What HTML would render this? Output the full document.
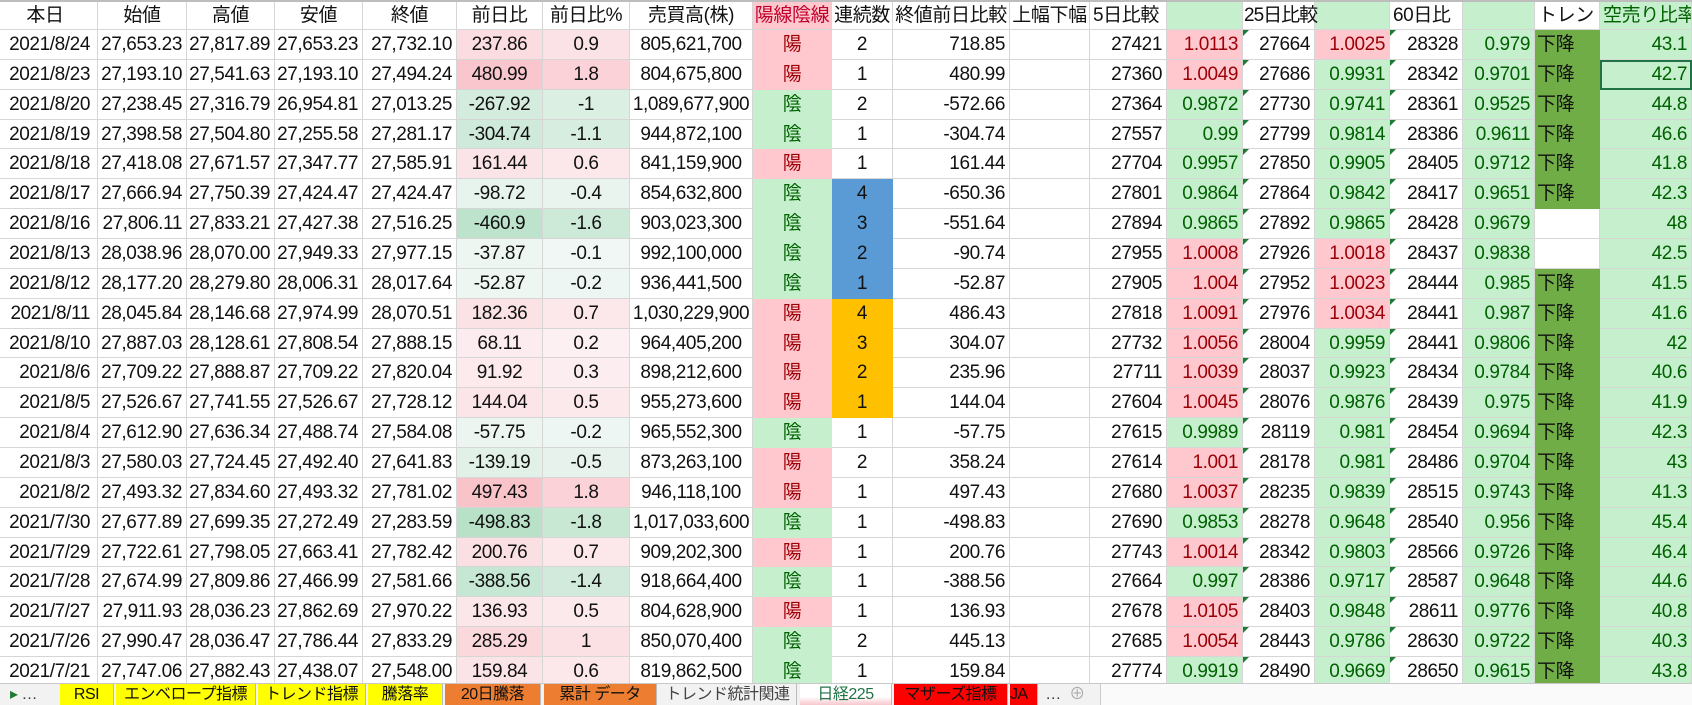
<!DOCTYPE html>
<html><head><meta charset="utf-8"><style>
*{margin:0;padding:0;box-sizing:border-box}
body{width:1692px;height:705px;overflow:hidden;background:#fff;font-family:"Liberation Sans","Noto Sans CJK JP",sans-serif;font-size:19px;letter-spacing:-0.4px;color:#111;position:relative}
.r{display:grid;grid-template-columns:98px 89px 88px 88px 94px 86px 87px 123px 79px 61px 117px 80px 77px 76px 72px 75px 73px 72px 65px 92px;height:29.86px}
.r i{font-style:normal;display:block;border-right:1px solid #d6d6d6;border-bottom:1px solid #d6d6d6;text-align:right;padding-right:4px;line-height:29px;white-space:nowrap;overflow:hidden;position:relative}
.r i:first-child{padding-right:7px}
.hd{height:30px;border-top:2px solid #bdbdbd}
.hd i{text-align:center;padding:0;line-height:27px}
.hd i.l{text-align:left;padding-left:3px}
.r i.c{text-align:center;padding:0}
.y{background:#ffc7ce;color:#9c0006;border-color:#ffc7ce!important}
.n{background:#c6efce;color:#006100;border-color:#c6efce!important}
.p{background:#ffc7ce;color:#9c0006}
.g{background:#c6efce;color:#006100}
.t::before{content:"";position:absolute;left:0;top:0;border-top:6px solid #1e7b34;border-right:6px solid transparent}
.d{background:#70ad47;text-align:left!important;padding-left:2px!important;border-color:#70ad47!important}
.s{background:#c6efce;color:#006100}
.b{background:#5b9bd5;border-color:#5b9bd5!important}
.o{background:#ffc000;border-color:#ffc000!important}
.sel{outline:2px solid #217346;outline-offset:-2px}
#tabs{position:absolute;left:0;top:683px;width:1692px;height:22px;background:#f2f2f2;border-top:1px solid #c8c8c8;font-size:16px;letter-spacing:-0.5px}
#tabs div{position:absolute;top:0;height:21px;line-height:21px;text-align:center;color:#111;border-right:1px solid #bbb}
</style></head><body>
<div class="r hd"><i>本日</i><i>始値</i><i>高値</i><i>安値</i><i>終値</i><i>前日比</i><i>前日比%</i><i>売買高(株)</i><i style="background:#ffc7ce;color:#c0002a">陽線陰線</i><i>連続数</i><i>終値前日比較</i><i>上幅下幅</i><i class="l">5日比較</i><i style="background:#c6efce"></i><i class="l" style="overflow:visible;z-index:2;letter-spacing:-1px;padding-left:1px">25日比較</i><i style="background:#c6efce"></i><i class="l">60日比</i><i style="background:#c6efce"></i><i class="l">トレンド</i><i class="l" style="background:#c6efce;color:#006100">空売り比率</i></div>
<div class="r"><i>2021/8/24</i><i>27,653.23</i><i>27,817.89</i><i>27,653.23</i><i>27,732.10</i><i class="c" style="background:#fbdce0">237.86</i><i class="c" style="background:#fbe2e6">0.9</i><i class="c">805,621,700</i><i class="c y">陽</i><i class="c">2</i><i>718.85</i><i></i><i>27421</i><i class="p">1.0113</i><i class="t">27664</i><i class="p">1.0025</i><i class="t">28328</i><i class="g">0.979</i><i class="d">下降</i><i class="s">43.1</i></div>
<div class="r"><i>2021/8/23</i><i>27,193.10</i><i>27,541.63</i><i>27,193.10</i><i>27,494.24</i><i class="c" style="background:#f8c6cc">480.99</i><i class="c" style="background:#fad2d7">1.8</i><i class="c">804,675,800</i><i class="c y">陽</i><i class="c">1</i><i>480.99</i><i></i><i>27360</i><i class="p">1.0049</i><i class="t">27686</i><i class="g">0.9931</i><i class="t">28342</i><i class="g">0.9701</i><i class="d">下降</i><i class="s sel">42.7</i></div>
<div class="r"><i>2021/8/20</i><i>27,238.45</i><i>27,316.79</i><i>26,954.81</i><i>27,013.25</i><i class="c" style="background:#d3ecdd">-267.92</i><i class="c" style="background:#dbefe3">-1</i><i class="c">1,089,677,900</i><i class="c n">陰</i><i class="c">2</i><i>-572.66</i><i></i><i>27364</i><i class="g">0.9872</i><i class="t">27730</i><i class="g">0.9741</i><i class="t">28361</i><i class="g">0.9525</i><i class="d">下降</i><i class="s">44.8</i></div>
<div class="r"><i>2021/8/19</i><i>27,398.58</i><i>27,504.80</i><i>27,255.58</i><i>27,281.17</i><i class="c" style="background:#cfeada">-304.74</i><i class="c" style="background:#d7ede0">-1.1</i><i class="c">944,872,100</i><i class="c n">陰</i><i class="c">1</i><i>-304.74</i><i></i><i>27557</i><i class="g">0.99</i><i class="t">27799</i><i class="g">0.9814</i><i class="t">28386</i><i class="g">0.9611</i><i class="d">下降</i><i class="s">46.6</i></div>
<div class="r"><i>2021/8/18</i><i>27,418.08</i><i>27,671.57</i><i>27,347.77</i><i>27,585.91</i><i class="c" style="background:#fbe4e7">161.44</i><i class="c" style="background:#fce8eb">0.6</i><i class="c">841,159,900</i><i class="c y">陽</i><i class="c">1</i><i>161.44</i><i></i><i>27704</i><i class="g">0.9957</i><i class="t">27850</i><i class="g">0.9905</i><i class="t">28405</i><i class="g">0.9712</i><i class="d">下降</i><i class="s">41.8</i></div>
<div class="r"><i>2021/8/17</i><i>27,666.94</i><i>27,750.39</i><i>27,424.47</i><i>27,424.47</i><i class="c" style="background:#e7f3ed">-98.72</i><i class="c" style="background:#e9f4ee">-0.4</i><i class="c">854,632,800</i><i class="c n">陰</i><i class="c b">4</i><i>-650.36</i><i></i><i>27801</i><i class="g">0.9864</i><i class="t">27864</i><i class="g">0.9842</i><i class="t">28417</i><i class="g">0.9651</i><i class="d">下降</i><i class="s">42.3</i></div>
<div class="r"><i>2021/8/16</i><i>27,806.11</i><i>27,833.21</i><i>27,427.38</i><i>27,516.25</i><i class="c" style="background:#bde3cc">-460.9</i><i class="c" style="background:#cde9d7">-1.6</i><i class="c">903,023,300</i><i class="c n">陰</i><i class="c b">3</i><i>-551.64</i><i></i><i>27894</i><i class="g">0.9865</i><i class="t">27892</i><i class="g">0.9865</i><i class="t">28428</i><i class="g">0.9679</i><i></i><i class="s">48</i></div>
<div class="r"><i>2021/8/13</i><i>28,038.96</i><i>28,070.00</i><i>27,949.33</i><i>27,977.15</i><i class="c" style="background:#eef6f2">-37.87</i><i class="c" style="background:#f1f7f5">-0.1</i><i class="c">992,100,000</i><i class="c n">陰</i><i class="c b">2</i><i>-90.74</i><i></i><i>27955</i><i class="p">1.0008</i><i class="t">27926</i><i class="p">1.0018</i><i class="t">28437</i><i class="g">0.9838</i><i></i><i class="s">42.5</i></div>
<div class="r"><i>2021/8/12</i><i>28,177.20</i><i>28,279.80</i><i>28,006.31</i><i>28,017.64</i><i class="c" style="background:#edf6f1">-52.87</i><i class="c" style="background:#eef6f3">-0.2</i><i class="c">936,441,500</i><i class="c n">陰</i><i class="c b">1</i><i>-52.87</i><i></i><i>27905</i><i class="p">1.004</i><i class="t">27952</i><i class="p">1.0023</i><i class="t">28444</i><i class="g">0.985</i><i class="d">下降</i><i class="s">41.5</i></div>
<div class="r"><i>2021/8/11</i><i>28,045.84</i><i>28,146.68</i><i>27,974.99</i><i>28,070.51</i><i class="c" style="background:#fbe2e5">182.36</i><i class="c" style="background:#fce7ea">0.7</i><i class="c">1,030,229,900</i><i class="c y">陽</i><i class="c o">4</i><i>486.43</i><i></i><i>27818</i><i class="p">1.0091</i><i class="t">27976</i><i class="p">1.0034</i><i class="t">28441</i><i class="g">0.987</i><i class="d">下降</i><i class="s">41.6</i></div>
<div class="r"><i>2021/8/10</i><i>27,887.03</i><i>28,128.61</i><i>27,808.54</i><i>27,888.15</i><i class="c" style="background:#fcecef">68.11</i><i class="c" style="background:#fcf0f2">0.2</i><i class="c">964,405,200</i><i class="c y">陽</i><i class="c o">3</i><i>304.07</i><i></i><i>27732</i><i class="p">1.0056</i><i class="t">28004</i><i class="g">0.9959</i><i class="t">28441</i><i class="g">0.9806</i><i class="d">下降</i><i class="s">42</i></div>
<div class="r"><i>2021/8/6</i><i>27,709.22</i><i>27,888.87</i><i>27,709.22</i><i>27,820.04</i><i class="c" style="background:#fceaed">91.92</i><i class="c" style="background:#fcedf0">0.3</i><i class="c">898,212,600</i><i class="c y">陽</i><i class="c o">2</i><i>235.96</i><i></i><i>27711</i><i class="p">1.0039</i><i class="t">28037</i><i class="g">0.9923</i><i class="t">28434</i><i class="g">0.9784</i><i class="d">下降</i><i class="s">40.6</i></div>
<div class="r"><i>2021/8/5</i><i>27,526.67</i><i>27,741.55</i><i>27,526.67</i><i>27,728.12</i><i class="c" style="background:#fce5e8">144.04</i><i class="c" style="background:#fce9ec">0.5</i><i class="c">955,273,600</i><i class="c y">陽</i><i class="c o">1</i><i>144.04</i><i></i><i>27604</i><i class="p">1.0045</i><i class="t">28076</i><i class="g">0.9876</i><i class="t">28439</i><i class="g">0.975</i><i class="d">下降</i><i class="s">41.9</i></div>
<div class="r"><i>2021/8/4</i><i>27,612.90</i><i>27,636.34</i><i>27,488.74</i><i>27,584.08</i><i class="c" style="background:#edf5f1">-57.75</i><i class="c" style="background:#eef6f3">-0.2</i><i class="c">965,552,300</i><i class="c n">陰</i><i class="c">1</i><i>-57.75</i><i></i><i>27615</i><i class="g">0.9989</i><i class="t">28119</i><i class="g">0.981</i><i class="t">28454</i><i class="g">0.9694</i><i class="d">下降</i><i class="s">42.3</i></div>
<div class="r"><i>2021/8/3</i><i>27,580.03</i><i>27,724.45</i><i>27,492.40</i><i>27,641.83</i><i class="c" style="background:#e2f1e7">-139.19</i><i class="c" style="background:#e6f2eb">-0.5</i><i class="c">873,263,100</i><i class="c y">陽</i><i class="c">2</i><i>358.24</i><i></i><i>27614</i><i class="p">1.001</i><i class="t">28178</i><i class="g">0.981</i><i class="t">28486</i><i class="g">0.9704</i><i class="d">下降</i><i class="s">43</i></div>
<div class="r"><i>2021/8/2</i><i>27,493.32</i><i>27,834.60</i><i>27,493.32</i><i>27,781.02</i><i class="c" style="background:#f8c4ca">497.43</i><i class="c" style="background:#fad2d7">1.8</i><i class="c">946,118,100</i><i class="c y">陽</i><i class="c">1</i><i>497.43</i><i></i><i>27680</i><i class="p">1.0037</i><i class="t">28235</i><i class="g">0.9839</i><i class="t">28515</i><i class="g">0.9743</i><i class="d">下降</i><i class="s">41.3</i></div>
<div class="r"><i>2021/7/30</i><i>27,677.89</i><i>27,699.35</i><i>27,272.49</i><i>27,283.59</i><i class="c" style="background:#b8e1c8">-498.83</i><i class="c" style="background:#c8e8d4">-1.8</i><i class="c">1,017,033,600</i><i class="c n">陰</i><i class="c">1</i><i>-498.83</i><i></i><i>27690</i><i class="g">0.9853</i><i class="t">28278</i><i class="g">0.9648</i><i class="t">28540</i><i class="g">0.956</i><i class="d">下降</i><i class="s">45.4</i></div>
<div class="r"><i>2021/7/29</i><i>27,722.61</i><i>27,798.05</i><i>27,663.41</i><i>27,782.42</i><i class="c" style="background:#fbe0e3">200.76</i><i class="c" style="background:#fce7ea">0.7</i><i class="c">909,202,300</i><i class="c y">陽</i><i class="c">1</i><i>200.76</i><i></i><i>27743</i><i class="p">1.0014</i><i class="t">28342</i><i class="g">0.9803</i><i class="t">28566</i><i class="g">0.9726</i><i class="d">下降</i><i class="s">46.4</i></div>
<div class="r"><i>2021/7/28</i><i>27,674.99</i><i>27,809.86</i><i>27,466.99</i><i>27,581.66</i><i class="c" style="background:#c5e7d3">-388.56</i><i class="c" style="background:#d1eadb">-1.4</i><i class="c">918,664,400</i><i class="c n">陰</i><i class="c">1</i><i>-388.56</i><i></i><i>27664</i><i class="g">0.997</i><i class="t">28386</i><i class="g">0.9717</i><i class="t">28587</i><i class="g">0.9648</i><i class="d">下降</i><i class="s">44.6</i></div>
<div class="r"><i>2021/7/27</i><i>27,911.93</i><i>28,036.23</i><i>27,862.69</i><i>27,970.22</i><i class="c" style="background:#fbe6e9">136.93</i><i class="c" style="background:#fce9ec">0.5</i><i class="c">804,628,900</i><i class="c y">陽</i><i class="c">1</i><i>136.93</i><i></i><i>27678</i><i class="p">1.0105</i><i class="t">28403</i><i class="g">0.9848</i><i class="t">28611</i><i class="g">0.9776</i><i class="d">下降</i><i class="s">40.8</i></div>
<div class="r"><i>2021/7/26</i><i>27,990.47</i><i>28,036.47</i><i>27,786.44</i><i>27,833.29</i><i class="c" style="background:#fad8dc">285.29</i><i class="c" style="background:#fbe0e4">1</i><i class="c">850,070,400</i><i class="c n">陰</i><i class="c">2</i><i>445.13</i><i></i><i>27685</i><i class="p">1.0054</i><i class="t">28443</i><i class="g">0.9786</i><i class="t">28630</i><i class="g">0.9722</i><i class="d">下降</i><i class="s">40.3</i></div>
<div class="r"><i>2021/7/21</i><i>27,747.06</i><i>27,882.43</i><i>27,438.07</i><i>27,548.00</i><i class="c" style="background:#fbe4e7">159.84</i><i class="c" style="background:#fce8eb">0.6</i><i class="c">819,862,500</i><i class="c n">陰</i><i class="c">1</i><i>159.84</i><i></i><i>27774</i><i class="g">0.9919</i><i class="t">28490</i><i class="g">0.9669</i><i class="t">28650</i><i class="g">0.9615</i><i class="d">下降</i><i class="s">43.8</i></div>
<div id="tabs">
<div style="left:0;width:58px;border:none;color:#1e7b34;text-align:left;padding-left:10px">▸ <span style="color:#333">…</span></div>
<div style="left:60px;width:54px;background:#ffff00">RSI</div>
<div style="left:116px;width:140px;background:#ffff00">エンベロープ指標</div>
<div style="left:258px;width:108px;background:#ffff00">トレンド指標</div>
<div style="left:368px;width:75px;background:#ffff00">騰落率</div>
<div style="left:445px;width:96px;background:#ed7d31">20日騰落</div>
<div style="left:544px;width:113px;background:#ed7d31">累計 データ</div>
<div style="left:659px;width:138px;color:#444">トレンド統計関連</div>
<div style="left:800px;width:92px;background:linear-gradient(#fff 60%,#f7c6cc);color:#217346">日経225</div>
<div style="left:894px;width:114px;background:#ff0000">マザーズ指標</div>
<div style="left:1010px;width:28px;background:#ff0000;text-align:left;overflow:hidden">JA</div>
<div style="left:1040px;width:26px;border:none;color:#333">…</div>
<div style="left:1066px;width:22px;border:none;color:#aaa">⊕</div>
<div style="left:1100px;width:592px;border:none;border-left:1px solid #ccc;background:#fafafa"></div>
</div>
</body></html>
